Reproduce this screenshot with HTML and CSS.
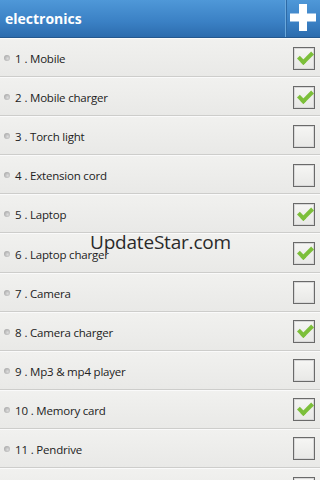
FILE: index.html
```html
<!DOCTYPE html>
<html>
<head>
<meta charset="utf-8">
<link rel="stylesheet" href="styles.css">
</head>
<body>
<div class="app">
  <header class="bar">
    <div class="title">electronics</div>
    <div class="add">
      <svg width="26" height="27" viewBox="0 0 26 27"><path d="M9 0h8v9.5h9v8h-9V27H9v-9.5H0v-8h9z" fill="#fff"/></svg>
    </div>
  </header>
  <ul class="list">
    <li class="row"><span class="dot"></span><span class="label"><span class="num">1</span>. Mobile</span><span class="box on"></span></li>
    <li class="row"><span class="dot"></span><span class="label"><span class="num">2</span>. Mobile charger</span><span class="box on"></span></li>
    <li class="row"><span class="dot"></span><span class="label"><span class="num">3</span>. Torch light</span><span class="box"></span></li>
    <li class="row"><span class="dot"></span><span class="label"><span class="num">4</span>. Extension cord</span><span class="box"></span></li>
    <li class="row"><span class="dot"></span><span class="label"><span class="num">5</span>. Laptop</span><span class="box on"></span></li>
    <li class="row"><span class="dot"></span><span class="label"><span class="num">6</span>. Laptop charger</span><span class="box on"></span></li>
    <li class="row"><span class="dot"></span><span class="label"><span class="num">7</span>. Camera</span><span class="box"></span></li>
    <li class="row"><span class="dot"></span><span class="label"><span class="num">8</span>. Camera charger</span><span class="box on"></span></li>
    <li class="row"><span class="dot"></span><span class="label"><span class="num">9</span>. Mp3 &amp; mp4 player</span><span class="box"></span></li>
    <li class="row"><span class="dot"></span><span class="label"><span class="num">10</span>. Memory card</span><span class="box on"></span></li>
    <li class="row"><span class="dot"></span><span class="label"><span class="num">11</span>. Pendrive</span><span class="box"></span></li>
    <li class="row"><span class="dot"></span><span class="label"></span><span class="box"></span></li>
  </ul>
  <div class="watermark">UpdateStar.com</div>
</div>
</body>
</html>
```
FILE: styles.css
```css
html, body { margin: 0; padding: 0; }
body { width: 320px; height: 480px; overflow: hidden; background: #ececea; font-family: "Open Sans", "DejaVu Sans", sans-serif; }
.app { position: relative; width: 320px; height: 480px; overflow: hidden; }
.bar {
  height: 37px;
  display: flex;
  align-items: stretch;
  background: linear-gradient(#4f98d8, #3a80c4 60%, #2c6cae);
  border-bottom: 1px solid #24588e;
}
.title {
  flex: 1;
  display: flex;
  align-items: center;
  padding-left: 5px;
  padding-bottom: 1px;
  color: #fff;
  font-weight: bold;
  font-size: 14px;
}
.add {
  width: 34px;
  display: flex;
  align-items: center;
  justify-content: center;
  border-left: 1px solid #6aa8dc;
  box-shadow: inset 1px 0 0 #2e6aa6;
  padding-bottom: 3px;
}
.list { list-style: none; margin: 0; padding: 0; }
.row {
  height: 38.1px;
  display: flex;
  align-items: center;
  background: linear-gradient(#f1f1ef, #e9e9e7);
  border-bottom: 1px solid #cdcdcb;
  box-shadow: inset 0 1px 0 #fafafa;
}
.dot {
  width: 6px; height: 6px;
  margin-left: 4px;
  margin-right: 5px;
  margin-top: 2px;
  border-radius: 50%;
  background: radial-gradient(circle at 60% 60%, #dcdcdc, #9a9a9a);
}
.label {
  flex: 1;
  color: #222;
  font-size: 11.5px;
  letter-spacing: -0.2px;
  padding-top: 3px;
}
.num { margin-right: 3px; }
.box {
  width: 20px; height: 21px;
  margin-right: 5px;
  margin-top: 2px;
  border: 1px solid #6a6a6a;
  box-shadow: inset 0 0 0 1px #d8d8d8;
  background: linear-gradient(#f6f6f4, #e8e8e6);
  position: relative;
}
.box.on::after {
  content: "";
  position: absolute;
  left: 7px; top: 1px;
  width: 5px; height: 11px;
  border-right: 4px solid #7cbf3a;
  border-bottom: 4px solid #7cbf3a;
  transform: rotate(45deg);
}
.watermark {
  position: absolute;
  left: 90px;
  top: 229px;
  font-size: 19px;
  color: #2a2a2a;
  letter-spacing: -0.2px;
}
```
